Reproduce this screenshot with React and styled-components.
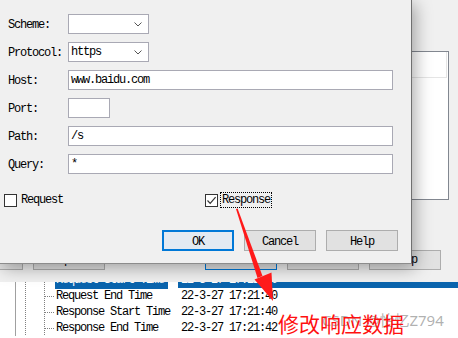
import styled, { createGlobalStyle } from "styled-components";

const GlobalStyle = createGlobalStyle`
  html, body { margin: 0; padding: 0; }
  body { width: 458px; height: 338px; overflow: hidden; background: #f0f0f0; }
`;

const Screen = styled.div`
  position: relative;
  width: 458px;
  height: 338px;
  overflow: hidden;
  background: #f0f0f0;
  font-family: "Liberation Mono", "Courier New", "DejaVu Sans Mono", monospace;
  font-size: 12px;
  letter-spacing: -1.2px;
  color: #000;
`;

/* ---------- window behind the dialog ---------- */

const BackWindow = styled.div`
  display: flex;
  flex-direction: column;
  height: 100%;
`;

const ListPanel = styled.div`
  margin: 51px 9px 0 300px;
  height: 147px;
  border: 1px solid #828790;
  background: #fff;
`;

const ListHeader = styled.div`
  height: 25px;
  border-bottom: 1px solid #e5e5e5;
  border-right: 1px solid #e5e5e5;
  margin-right: 1px;
`;

const ButtonBar = styled.div`
  display: flex;
  gap: 100px;
  margin: 50px 0 0 -49px;
`;

const ButtonGroup = styled.div`
  display: flex;
  gap: 10px;
`;

const BackButton = styled.div`
  width: 72px;
  height: 20px;
  box-sizing: border-box;
  border: 1px solid ${(p) => (p.$focused ? "#0078d7" : "#adadad")};
  background: #e1e1e1;
  display: flex;
  align-items: center;
  justify-content: center;
`;

const Tree = styled.div`
  margin-top: 12px;
  flex: 1;
  background: #fff;
  overflow: hidden;
`;

const TreeRow = styled.div`
  display: flex;
  height: 16px;
  line-height: 17px;
  margin-top: ${(p) => p.$offset || 0}px;
`;

const Guides = styled.div`
  flex: none;
  width: 55px;
  background:
    linear-gradient(#a0a0a0, #a0a0a0) 15px 0 / 1px 100% no-repeat,
    repeating-linear-gradient(to bottom, #808080 0 1px, transparent 1px 2px) 25px 0 / 1px 100% no-repeat,
    repeating-linear-gradient(to bottom, #808080 0 1px, transparent 1px 2px) 44px 0 / 1px 100% no-repeat,
    repeating-linear-gradient(to right, #808080 0 1px, transparent 1px 2px) 45px 8px / 10px 1px no-repeat;
`;

const NameCell = styled.div`
  flex: none;
  width: 123px;
`;

const NameText = styled.span`
  display: inline-block;
  padding: 0 4px 0 1px;
  background: ${(p) => (p.$selected ? "#0a64ad" : "transparent")};
  color: ${(p) => (p.$selected ? "#fff" : "#000")};
`;

const TimeCell = styled.div`
  flex: 1;
  padding-left: 3px;
  background: ${(p) => (p.$selected ? "#0a64ad" : "transparent")};
  color: ${(p) => (p.$selected ? "#fff" : "#000")};
`;

/* ---------- dialog ---------- */

const Dialog = styled.div`
  position: absolute;
  left: 0;
  top: 0;
  width: 412px;
  height: 264px;
  box-sizing: border-box;
  background: #f0f0f0;
  border-right: 1px solid #707070;
  border-bottom: 1px solid #8c8c8c;
  box-shadow: 3px 4px 16px rgba(0, 0, 0, 0.34);
  padding: 14px 13px 0 8px;
  display: flex;
  flex-direction: column;
`;

const Form = styled.div`
  display: grid;
  grid-template-columns: 60px 1fr;
  grid-auto-rows: 20px;
  row-gap: 8px;
  align-items: center;
`;

const Label = styled.div`
  height: 20px;
  line-height: 23px;
`;

const Field = styled.div`
  width: ${(p) => p.$width}px;
  height: 20px;
  box-sizing: border-box;
  border: 1px solid #a9a9b4;
  background: #fff;
  padding: 0 6px 0 2px;
  line-height: 21px;
  display: flex;
  align-items: center;
  justify-content: space-between;
`;

const CheckRow = styled.div`
  display: grid;
  grid-template-columns: 201px auto;
  margin: 19px 0 0 -4px;
  align-items: center;
`;

const CheckItem = styled.div`
  display: flex;
  align-items: center;
  gap: 3px;
`;

const Box = styled.div`
  width: 13px;
  height: 13px;
  box-sizing: border-box;
  border: 1px solid #333;
  background: #fff;
  display: flex;
  align-items: center;
  justify-content: center;
`;

const CheckText = styled.span`
  padding: 1px 1px 0;
  line-height: 13px;
  outline: ${(p) => (p.$focus ? "1px dotted #000" : "none")};
  outline-offset: 0;
`;

const DialogButtons = styled.div`
  display: flex;
  justify-content: flex-end;
  gap: 10px;
  margin-top: 23px;
`;

const DialogButton = styled.div`
  width: 72px;
  height: 21px;
  box-sizing: border-box;
  padding-top: 2px;
  border: 1px solid ${(p) => (p.$default ? "#0078d7" : "#adadad")};
  box-shadow: ${(p) => (p.$default ? "inset 0 0 0 1px #0078d7" : "none")};
  background: ${(p) => (p.$default ? "#e3eaf2" : "#e1e1e1")};
  display: flex;
  align-items: center;
  justify-content: center;
`;

/* ---------- annotations ---------- */

const Overlay = styled.svg`
  position: absolute;
  left: 0;
  top: 0;
  pointer-events: none;
`;

const Watermark = styled.div`
  position: absolute;
  left: 322px;
  top: 309px;
  font-family: "Noto Sans", "Noto Sans CJK SC", sans-serif;
  font-size: 15px;
  letter-spacing: 0;
  color: rgba(110, 110, 110, 0.55);
  white-space: nowrap;
`;

const Note = styled.div`
  position: absolute;
  left: 278px;
  top: 313px;
  font-family: "Noto Sans CJK SC", sans-serif;
  font-size: 21px;
  line-height: 21px;
  letter-spacing: 0;
  color: #ff1010;
  white-space: nowrap;
`;

function Chevron() {
  return (
    <svg width="8" height="5" viewBox="0 0 8 5">
      <path d="M0.5 0.5 L4 4 L7.5 0.5" fill="none" stroke="#555" strokeWidth="1" />
    </svg>
  );
}

function Tick() {
  return (
    <svg width="11" height="11" viewBox="0 0 11 11">
      <path d="M1.5 5.5 L4.2 8.3 L9.6 2.2" fill="none" stroke="#333" strokeWidth="1.2" />
    </svg>
  );
}

const rows = [
  { name: "Request Start Time", time: "22-3-27 17:21:40", selected: true },
  { name: "Request End Time", time: "22-3-27 17:21:40" },
  { name: "Response Start Time", time: "22-3-27 17:21:40" },
  { name: "Response End Time", time: "22-3-27 17:21:42" },
];

export default function App() {
  return (
    <>
      <GlobalStyle />
      <Screen>
        <BackWindow>
          <ListPanel>
            <ListHeader />
          </ListPanel>
          <ButtonBar>
            <ButtonGroup>
              <BackButton />
              <BackButton>Request</BackButton>
            </ButtonGroup>
            <ButtonGroup>
              <BackButton $focused />
              <BackButton />
              <BackButton>Help</BackButton>
            </ButtonGroup>
          </ButtonBar>
          <Tree>
            {rows.map((r, i) => (
              <TreeRow key={r.name} $offset={i === 0 ? -10 : 0}>
                <Guides />
                <NameCell>
                  <NameText $selected={r.selected}>{r.name}</NameText>
                </NameCell>
                <TimeCell $selected={r.selected}>{r.time}</TimeCell>
              </TreeRow>
            ))}
          </Tree>
        </BackWindow>

        <Dialog>
          <Form>
            <Label>Scheme:</Label>
            <Field $width={81}>
              <span />
              <Chevron />
            </Field>
            <Label>Protocol:</Label>
            <Field $width={81}>
              <span>https</span>
              <Chevron />
            </Field>
            <Label>Host:</Label>
            <Field $width={325}>www.baidu.com</Field>
            <Label>Port:</Label>
            <Field $width={42} />
            <Label>Path:</Label>
            <Field $width={325}>/s</Field>
            <Label>Query:</Label>
            <Field $width={325}>*</Field>
          </Form>

          <CheckRow>
            <CheckItem>
              <Box />
              <CheckText>Request</CheckText>
            </CheckItem>
            <CheckItem>
              <Box>
                <Tick />
              </Box>
              <CheckText $focus>Response</CheckText>
            </CheckItem>
          </CheckRow>

          <DialogButtons>
            <DialogButton $default>OK</DialogButton>
            <DialogButton>Cancel</DialogButton>
            <DialogButton>Help</DialogButton>
          </DialogButtons>
        </Dialog>

        <Watermark>CSDN @怡忆Z794</Watermark>
        <Note>修改响应数据</Note>

        <Overlay width="458" height="338" viewBox="0 0 458 338">
          <polygon
            points="236,209 237.6,208.6 262.5,276 257.5,278"
            fill="#ff1a1a"
          />
          <polygon points="254.5,279.5 271.5,272.5 273,301" fill="#ff1a1a" />
        </Overlay>
      </Screen>
    </>
  );
}
